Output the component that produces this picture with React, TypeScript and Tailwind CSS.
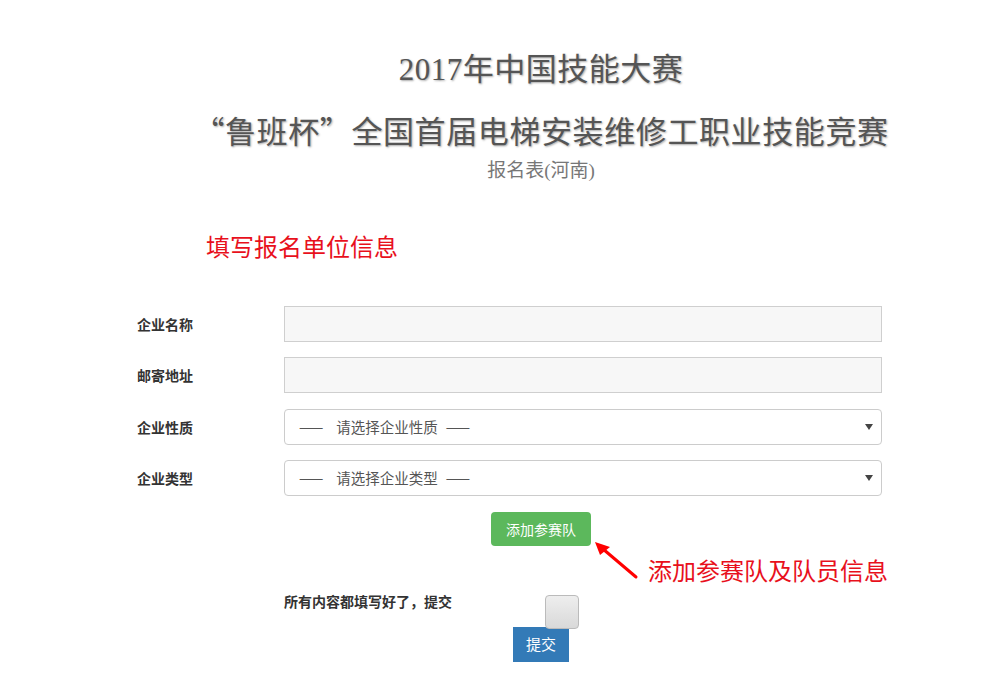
import React from "react";

const cjk = "font-['Noto_Sans_CJK_SC',sans-serif]";

const TextRow = ({ label, mt }: { label: string; mt: string }) => (
  <div className={`flex items-center ${mt}`}>
    <div className="w-[147px] shrink-0 text-[14px] font-bold text-[#333]">{label}</div>
    <input
      className="h-[36px] w-[598px] border border-[#cfcfcf] bg-[#f7f7f7] px-3 outline-none"
      readOnly
    />
  </div>
);

const SelectRow = ({ label, placeholder, mt }: { label: string; placeholder: string; mt: string }) => (
  <div className={`flex items-center ${mt}`}>
    <div className="w-[147px] shrink-0 text-[14px] font-bold text-[#333]">{label}</div>
    <div className="flex h-[36px] w-[598px] items-center justify-between rounded-[4px] border border-[#ccc] bg-white pl-[14px] pr-[8px] text-[14.5px] text-[#555]">
      <span className="flex items-center">
        <span>——</span>
        <span className="ml-[13px]">请选择{placeholder}</span>
        <span className="ml-[8px]">——</span>
      </span>
      <svg width="8" height="6" viewBox="0 0 8 6">
        <path d="M0 0H8L4 6Z" fill="#444" />
      </svg>
    </div>
  </div>
);

export default function App() {
  return (
    <div className={`min-h-[686px] w-full bg-white ${cjk}`}>
      <div className="pl-[89px]">
        {/* heading */}
        <div className="pt-[50px] text-center font-['Liberation_Serif','Noto_Sans_CJK_SC',serif] text-[#555] [text-shadow:1px_1px_2px_#aaa]">
          <h1 className="text-[31px] leading-[40px] tracking-[0.5px]">2017年中国技能大赛</h1>
          <h2 className="mt-[20px] text-[31px] leading-[40px] tracking-[0.6px]">
            <span className="font-['Noto_Sans_CJK_SC',sans-serif]">“</span>鲁班杯<span className="font-['Noto_Sans_CJK_SC',sans-serif]">”</span>全国首届电梯安装维修工职业技能竞赛
          </h2>
          <p className="mt-[6px] text-[19px] leading-[24px] text-[#777] [text-shadow:none]">报名表(河南)</p>
        </div>
      </div>

      <div className="mt-[47px] pl-[206px] text-[24px] leading-[32px] text-[#e8101c]">填写报名单位信息</div>

      {/* form */}
      <div className="mt-[44px] pl-[137px]">
        <TextRow label="企业名称" mt="" />
        <TextRow label="邮寄地址" mt="mt-[15px]" />
        <SelectRow label="企业性质" placeholder="企业性质" mt="mt-[16px]" />
        <SelectRow label="企业类型" placeholder="企业类型" mt="mt-[15px]" />
      </div>

      <div className="relative mt-[16px] flex justify-center pl-[89px]">
        <button className="h-[34px] w-[100px] rounded-[4px] bg-[#5cb85c] text-[14px] text-white">添加参赛队</button>
        <div className="absolute left-[594px] top-[30px]">
          <svg width="46" height="38" viewBox="0 0 46 38">
            <path d="M42 35L9 7" stroke="#f00" strokeWidth="3" strokeLinecap="round" />
            <path d="M1 0L16 5L6 13Z" fill="#f00" />
          </svg>
        </div>
        <div className="absolute left-[648px] top-[42px] text-[24px] leading-[32px] text-[#e8101c]">添加参赛队及队员信息</div>
      </div>

      {/* submit */}
      <div className="mt-[49px] flex items-start pl-[284px]">
        <span className="mt-[-4px] text-[14px] font-bold text-[#333]">所有内容都填写好了，提交</span>
        <div className="relative z-10 ml-[93px] h-[34px] w-[34px] rounded-[4px] border border-[#bbb] bg-gradient-to-b from-[#eee] to-[#d9d9d9]" />
      </div>
      <div className="-mt-[2px] flex justify-center pl-[89px]">
        <button className="h-[35px] w-[56px] bg-[#337ab7] text-[15px] text-white">提交</button>
      </div>
    </div>
  );
}
